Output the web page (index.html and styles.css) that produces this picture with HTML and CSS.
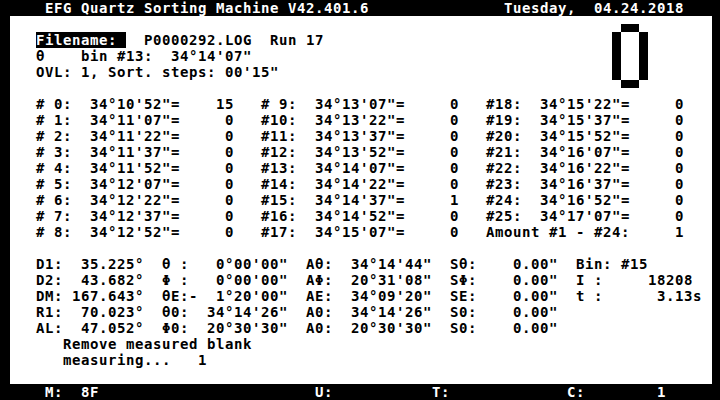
FILE: index.html
```html
<!DOCTYPE html>
<html lang="en">
<head>
<meta charset="utf-8">
<title>EFG Quartz Sorting Machine</title>
<link rel="stylesheet" href="styles.css">
</head>
<body>
<div class="screen">
  <header class="bar">EFG Quartz Sorting Machine V42.401.6               Tuesday,  04.24.2018</header>
  <main class="panel">
    <section class="head">
      <div class="head-text">
        <div class="line"><span class="inv">Filename: </span>  P0000292.LOG  Run 17</div>
        <div class="line">θ    bin #13:  34°14'07"</div>
        <div class="line">OVL: 1, Sort. steps: 00'15"</div>
      </div>
      <svg class="digit" viewBox="0 0 36 64" width="36" height="64" aria-label="0">
        <rect x="9" y="0" width="18" height="8"/>
        <rect x="0" y="8" width="9" height="48"/>
        <rect x="27" y="8" width="9" height="48"/>
        <rect x="9" y="56" width="18" height="8"/>
      </svg>
    </section>

    <section class="bins">
      <div class="bin"><span class="no"># 0:</span><span class="ang">34°10'52"=</span><span class="cnt">15</span></div>
      <div class="bin"><span class="no"># 1:</span><span class="ang">34°11'07"=</span><span class="cnt">0</span></div>
      <div class="bin"><span class="no"># 2:</span><span class="ang">34°11'22"=</span><span class="cnt">0</span></div>
      <div class="bin"><span class="no"># 3:</span><span class="ang">34°11'37"=</span><span class="cnt">0</span></div>
      <div class="bin"><span class="no"># 4:</span><span class="ang">34°11'52"=</span><span class="cnt">0</span></div>
      <div class="bin"><span class="no"># 5:</span><span class="ang">34°12'07"=</span><span class="cnt">0</span></div>
      <div class="bin"><span class="no"># 6:</span><span class="ang">34°12'22"=</span><span class="cnt">0</span></div>
      <div class="bin"><span class="no"># 7:</span><span class="ang">34°12'37"=</span><span class="cnt">0</span></div>
      <div class="bin"><span class="no"># 8:</span><span class="ang">34°12'52"=</span><span class="cnt">0</span></div>
      <div class="bin"><span class="no"># 9:</span><span class="ang">34°13'07"=</span><span class="cnt">0</span></div>
      <div class="bin"><span class="no">#10:</span><span class="ang">34°13'22"=</span><span class="cnt">0</span></div>
      <div class="bin"><span class="no">#11:</span><span class="ang">34°13'37"=</span><span class="cnt">0</span></div>
      <div class="bin"><span class="no">#12:</span><span class="ang">34°13'52"=</span><span class="cnt">0</span></div>
      <div class="bin"><span class="no">#13:</span><span class="ang">34°14'07"=</span><span class="cnt">0</span></div>
      <div class="bin"><span class="no">#14:</span><span class="ang">34°14'22"=</span><span class="cnt">0</span></div>
      <div class="bin"><span class="no">#15:</span><span class="ang">34°14'37"=</span><span class="cnt">1</span></div>
      <div class="bin"><span class="no">#16:</span><span class="ang">34°14'52"=</span><span class="cnt">0</span></div>
      <div class="bin"><span class="no">#17:</span><span class="ang">34°15'07"=</span><span class="cnt">0</span></div>
      <div class="bin"><span class="no">#18:</span><span class="ang">34°15'22"=</span><span class="cnt">0</span></div>
      <div class="bin"><span class="no">#19:</span><span class="ang">34°15'37"=</span><span class="cnt">0</span></div>
      <div class="bin"><span class="no">#20:</span><span class="ang">34°15'52"=</span><span class="cnt">0</span></div>
      <div class="bin"><span class="no">#21:</span><span class="ang">34°16'07"=</span><span class="cnt">0</span></div>
      <div class="bin"><span class="no">#22:</span><span class="ang">34°16'22"=</span><span class="cnt">0</span></div>
      <div class="bin"><span class="no">#23:</span><span class="ang">34°16'37"=</span><span class="cnt">0</span></div>
      <div class="bin"><span class="no">#24:</span><span class="ang">34°16'52"=</span><span class="cnt">0</span></div>
      <div class="bin"><span class="no">#25:</span><span class="ang">34°17'07"=</span><span class="cnt">0</span></div>
      <div class="bin"><span class="amt">Amount #1 - #24:</span><span class="cnt">1</span></div>
    </section>

    <section class="stats">
      <div class="srow">
        <div class="f"><span class="k">D1:</span><span class="v">35.225°</span></div>
        <div class="f"><span class="k">θ :</span><span class="v">0°00'00"</span></div>
        <div class="f"><span class="k">Aθ:</span><span class="v">34°14'44"</span></div>
        <div class="f"><span class="k">Sθ:</span><span class="v">0.00"</span></div>
        <div class="x">Bin: #15</div>
      </div>
      <div class="srow">
        <div class="f"><span class="k">D2:</span><span class="v">43.682°</span></div>
        <div class="f"><span class="k">Φ :</span><span class="v">0°00'00"</span></div>
        <div class="f"><span class="k">AΦ:</span><span class="v">20°31'08"</span></div>
        <div class="f"><span class="k">SΦ:</span><span class="v">0.00"</span></div>
        <div class="x">I :     18208</div>
      </div>
      <div class="srow">
        <div class="f"><span class="k">DM:</span><span class="v">167.643°</span></div>
        <div class="f"><span class="k">θE:-</span><span class="v">1°20'00"</span></div>
        <div class="f"><span class="k">AE:</span><span class="v">34°09'20"</span></div>
        <div class="f"><span class="k">SE:</span><span class="v">0.00"</span></div>
        <div class="x">t :      3.13s</div>
      </div>
      <div class="srow">
        <div class="f"><span class="k">R1:</span><span class="v">70.023°</span></div>
        <div class="f"><span class="k">θ0:</span><span class="v">34°14'26"</span></div>
        <div class="f"><span class="k">A0:</span><span class="v">34°14'26"</span></div>
        <div class="f"><span class="k">S0:</span><span class="v">0.00"</span></div>
      </div>
      <div class="srow">
        <div class="f"><span class="k">AL:</span><span class="v">47.052°</span></div>
        <div class="f"><span class="k">Φ0:</span><span class="v">20°30'30"</span></div>
        <div class="f"><span class="k">A0:</span><span class="v">20°30'30"</span></div>
        <div class="f"><span class="k">S0:</span><span class="v">0.00"</span></div>
      </div>
    </section>

    <section class="msg">
      <div class="line">Remove measured blank</div>
      <div class="line">measuring...   1</div>
    </section>
  </main>
  <footer class="bar">M:  8F                        U:           T:             C:        1</footer>
</div>
</body>
</html>
```

FILE: styles.css
```css
html, body {
  margin: 0;
  padding: 0;
  background: #000;
}

body {
  font-family: "DejaVu Sans Mono", "Liberation Mono", monospace;
  font-weight: bold;
  font-size: 14px;
  line-height: 16px;
  letter-spacing: 0.571px;
}

.screen {
  width: 720px;
  height: 400px;
  display: flex;
  flex-direction: column;
  background: #000;
  color: #000;
  overflow: hidden;
}

.bar {
  height: 16px;
  flex: 0 0 16px;
  color: #fff;
  white-space: pre;
  padding-left: 45px;
}

.panel {
  flex: 0 0 368px;
  height: 368px;
  box-sizing: border-box;
  margin: 0 8px 0 10px;
  padding: 8px 0 0 26px;
  background: #fff;
}

.head {
  display: flex;
  align-items: flex-start;
  height: 64px;
}

.head-text {
  margin-top: 8px;
}

.line {
  height: 16px;
  white-space: pre;
}

.inv {
  display: inline-block;
  height: 16px;
  vertical-align: top;
  background: #000;
  color: #fff;
}

.digit {
  display: block;
  margin-left: auto;
  margin-right: 64px;
  fill: #000;
}

.bins {
  margin-top: 8px;
  display: grid;
  grid-template-columns: repeat(3, 225px);
  grid-template-rows: repeat(9, 16px);
  grid-auto-flow: column;
}

.bin {
  display: flex;
  white-space: pre;
}

.no {
  width: 54px;
}

.ang {
  width: 90px;
}

.amt {
  width: 144px;
}

.cnt {
  width: 54px;
  text-align: right;
}

.stats {
  margin-top: 16px;
}

.srow {
  display: grid;
  grid-template-columns: 108px 126px 126px 108px 126px;
  column-gap: 18px;
  height: 16px;
}

.f {
  display: flex;
  white-space: pre;
}

.k {
  min-width: 27px;
}

.v {
  flex: 1;
  text-align: right;
}

.x {
  white-space: pre;
}

.msg {
  padding-left: 27px;
}
```
